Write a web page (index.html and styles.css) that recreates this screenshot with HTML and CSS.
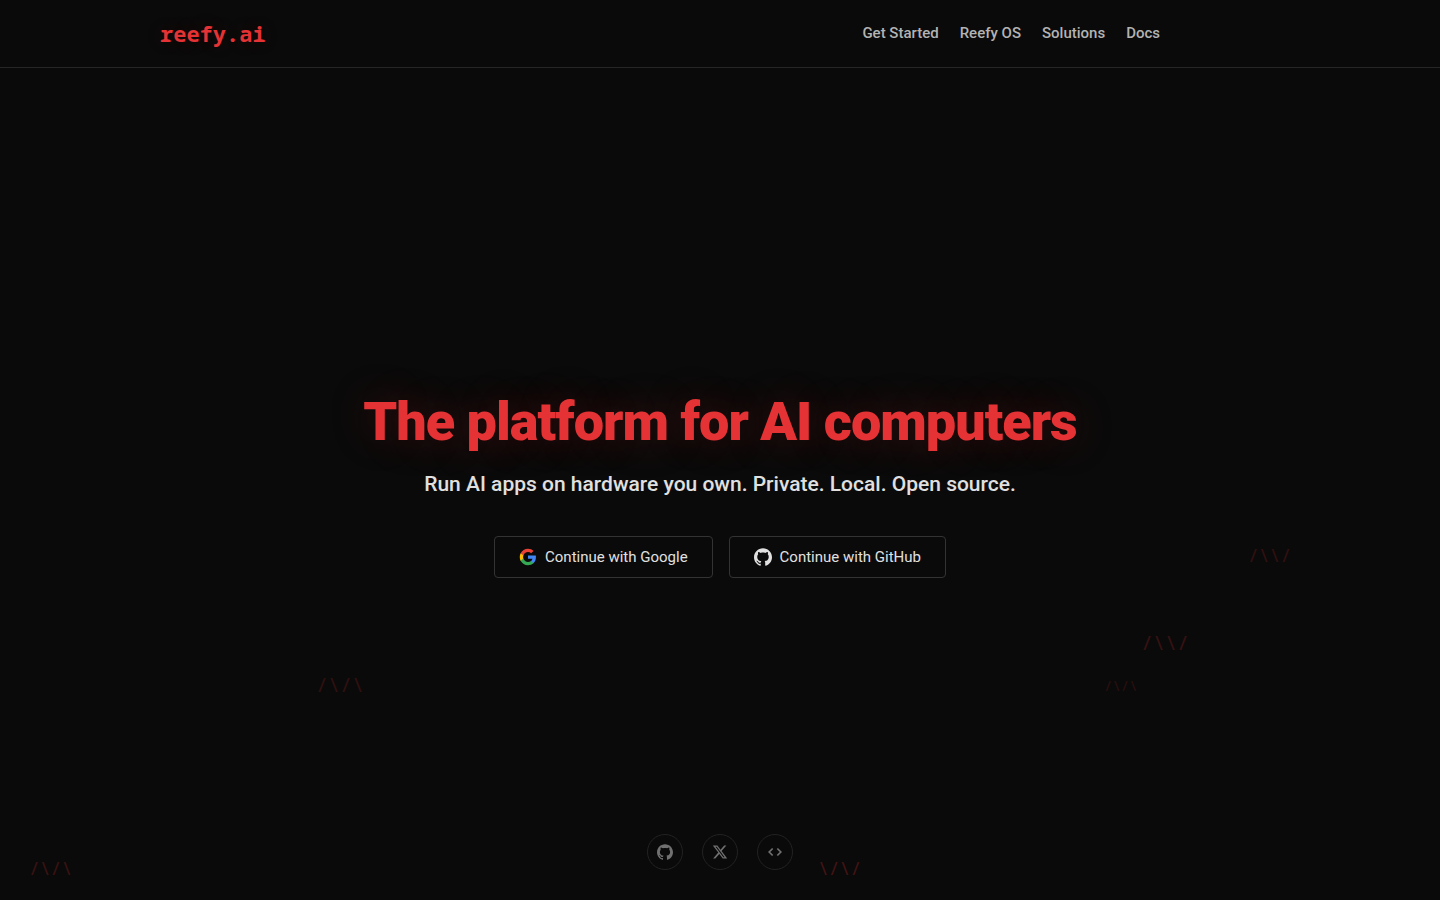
FILE: index.html
```html
<!DOCTYPE html>
<html lang="en">
<head>
<meta charset="utf-8">
<meta name="viewport" content="width=device-width, initial-scale=1">
<title>reefy.ai</title>
<link rel="stylesheet" href="styles.css">
</head>
<body>
<header class="header">
  <div class="header-inner">
    <a class="logo" href="#">reefy.ai</a>
    <nav class="nav">
      <a href="#">Get Started</a>
      <a href="#">Reefy OS</a>
      <a href="#">Solutions</a>
      <a href="#">Docs</a>
    </nav>
  </div>
</header>
<main class="hero">
  <h1 class="title">The platform for AI computers</h1>
  <p class="subtitle">Run AI apps on hardware you own. Private. Local. Open source.</p>
  <div class="actions">
    <button class="btn" type="button">
      <svg width="18" height="18" viewBox="0 0 24 24" aria-hidden="true"><path fill="#4285F4" d="M22.56 12.25c0-.78-.07-1.53-.2-2.25H12v4.26h5.92c-.26 1.37-1.04 2.53-2.21 3.31v2.77h3.57c2.08-1.92 3.28-4.74 3.28-8.09z"/><path fill="#34A853" d="M12 23c2.97 0 5.46-.98 7.28-2.66l-3.57-2.77c-.98.66-2.23 1.06-3.71 1.06-2.86 0-5.29-1.93-6.16-4.53H2.18v2.84C3.99 20.53 7.7 23 12 23z"/><path fill="#FBBC05" d="M5.84 14.09c-.22-.66-.35-1.36-.35-2.09s.13-1.43.35-2.09V7.07H2.18C1.43 8.55 1 10.22 1 12s.43 3.45 1.18 4.93l3.66-2.84z"/><path fill="#EA4335" d="M12 5.38c1.62 0 3.06.56 4.21 1.64l3.15-3.15C17.45 2.09 14.97 1 12 1 7.7 1 3.99 3.47 2.18 7.07l3.66 2.84c.87-2.6 3.3-4.53 6.16-4.53z"/></svg>
      Continue with Google
    </button>
    <button class="btn" type="button">
      <svg width="18" height="18" viewBox="0 0 24 24" fill="currentColor" aria-hidden="true"><path d="M12 .297c-6.63 0-12 5.373-12 12 0 5.303 3.438 9.8 8.205 11.385.6.113.82-.258.82-.577 0-.285-.01-1.04-.015-2.04-3.338.724-4.042-1.61-4.042-1.61C4.422 18.07 3.633 17.7 3.633 17.7c-1.087-.744.084-.729.084-.729 1.205.084 1.838 1.236 1.838 1.236 1.07 1.835 2.809 1.305 3.495.998.108-.776.417-1.305.76-1.605-2.665-.3-5.466-1.332-5.466-5.93 0-1.31.465-2.38 1.235-3.22-.135-.303-.54-1.523.105-3.176 0 0 1.005-.322 3.3 1.23.96-.267 1.98-.399 3-.405 1.02.006 2.04.138 3 .405 2.28-1.552 3.285-1.23 3.285-1.23.645 1.653.24 2.873.12 3.176.765.84 1.23 1.91 1.23 3.22 0 4.61-2.805 5.625-5.475 5.92.42.36.81 1.096.81 2.22 0 1.606-.015 2.896-.015 3.286 0 .315.21.69.825.57C20.565 22.092 24 17.592 24 12.297c0-6.627-5.373-12-12-12"/></svg>
      Continue with GitHub
    </button>
  </div>
</main>
<footer class="social">
  <a href="#" aria-label="GitHub"><svg width="16" height="16" viewBox="0 0 24 24" fill="currentColor"><path d="M12 .297c-6.63 0-12 5.373-12 12 0 5.303 3.438 9.8 8.205 11.385.6.113.82-.258.82-.577 0-.285-.01-1.04-.015-2.04-3.338.724-4.042-1.61-4.042-1.61C4.422 18.07 3.633 17.7 3.633 17.7c-1.087-.744.084-.729.084-.729 1.205.084 1.838 1.236 1.838 1.236 1.07 1.835 2.809 1.305 3.495.998.108-.776.417-1.305.76-1.605-2.665-.3-5.466-1.332-5.466-5.93 0-1.31.465-2.38 1.235-3.22-.135-.303-.54-1.523.105-3.176 0 0 1.005-.322 3.3 1.23.96-.267 1.98-.399 3-.405 1.02.006 2.04.138 3 .405 2.28-1.552 3.285-1.23 3.285-1.23.645 1.653.24 2.873.12 3.176.765.84 1.23 1.91 1.23 3.22 0 4.61-2.805 5.625-5.475 5.92.42.36.81 1.096.81 2.22 0 1.606-.015 2.896-.015 3.286 0 .315.21.69.825.57C20.565 22.092 24 17.592 24 12.297c0-6.627-5.373-12-12-12"/></svg></a>
  <a href="#" aria-label="X"><svg width="16" height="16" viewBox="0 0 24 24" fill="currentColor"><path d="M18.244 2.25h3.308l-7.227 8.26 8.502 11.24H16.17l-5.214-6.817L4.99 21.75H1.68l7.73-8.835L1.254 2.25H8.08l4.713 6.231zm-1.161 17.52h1.833L7.084 4.126H5.117z"/></svg></a>
  <a href="#" aria-label="Source code"><svg width="14" height="14" viewBox="0 0 24 24" fill="none" stroke="currentColor" stroke-width="3"><path d="M8 6l-6 6 6 6M16 6l6 6-6 6"/></svg></a>
</footer>
<div class="waves" aria-hidden="true">
  <span class="wave wave-a">/\/\</span>
  <span class="wave wave-b">/\/\</span>
  <span class="wave wave-c">\/\/</span>
  <span class="wave wave-d">/\/\</span>
  <span class="wave wave-e">/\\/</span>
  <span class="wave wave-f">/\\/</span>
</div>
</body>
</html>
```
FILE: styles.css
```css
* { box-sizing: border-box; }
html { background: #0a0a0a; }
body {
  margin: 0;
  min-height: 100vh;
  display: flex;
  flex-direction: column;
  position: relative;
  color: #e0e0e0;
  font-family: Roboto, sans-serif;
}
a { color: inherit; text-decoration: none; }
.header { border-bottom: 1px solid #262626; }
.header-inner {
  max-width: 1160px;
  margin: 0 auto;
  padding: 17px 140px 18px 20px;
  display: flex;
  align-items: center;
  justify-content: space-between;
}
.logo {
  font: 700 22px/32px "Noto Sans Mono", "DejaVu Sans Mono", monospace;
  color: #e53335;
  text-shadow: 0 0 20px rgba(229, 48, 48, 0.15);
}
.nav { display: flex; gap: 21px; font-size: 15px; line-height: 20px; font-weight: 500; color: #b3b3b3; }
.hero {
  flex: 1;
  display: flex;
  flex-direction: column;
  align-items: center;
  justify-content: center;
  padding-top: 66px;
}
.title {
  margin: 0 0 14px;
  font-size: 54px;
  line-height: 64px;
  font-weight: 900;
  letter-spacing: -1px;
  color: #e53335;
  text-align: center;
  text-shadow: 0 0 40px rgba(229, 48, 48, 0.25);
}
.subtitle { margin: 0 0 36px; font-size: 21px; line-height: 32px; font-weight: 500; text-align: center; }
.actions { display: flex; flex-wrap: wrap; justify-content: center; gap: 16px; }
.btn {
  display: flex;
  align-items: center;
  gap: 8px;
  height: 42px;
  padding: 0 24px;
  border: 1px solid #333;
  border-radius: 4px;
  background: transparent;
  color: #e0e0e0;
  font: 400 15px/22px Roboto, sans-serif;
}
.social { display: flex; justify-content: center; gap: 19px; padding-bottom: 30px; }
.social a {
  width: 36px;
  height: 36px;
  display: flex;
  align-items: center;
  justify-content: center;
  border: 1px solid #222;
  border-radius: 50%;
  color: #707070;
}
.waves { position: absolute; inset: 0; overflow: hidden; pointer-events: none; }
.wave {
  position: absolute;
  font: 400 18px/20px "Noto Sans Mono", "DejaVu Sans Mono", monospace;
  color: #e53335;
}
.wave-a { left: 29px; top: 858px; opacity: 0.22; }
.wave-b { left: 316px; top: 675px; font-size: 20px; opacity: 0.17; }
.wave-c { left: 818px; top: 858px; opacity: 0.26; }
.wave-d { left: 1104px; top: 676px; font-size: 14px; opacity: 0.15; }
.wave-e { left: 1141px; top: 633px; font-size: 20px; opacity: 0.2; }
.wave-f { left: 1248px; top: 545px; opacity: 0.18; }
```
